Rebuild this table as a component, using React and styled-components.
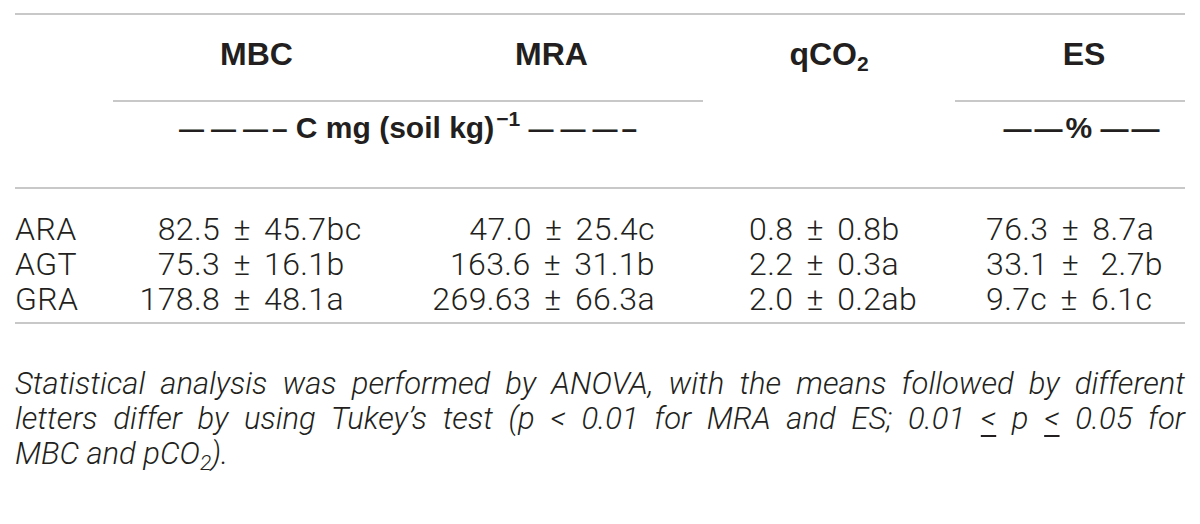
import React from "react";
import styled, { createGlobalStyle } from "styled-components";

const GlobalStyle = createGlobalStyle`
  html, body {
    margin: 0;
    padding: 0;
    background: #ffffff;
  }
  body {
    color: #231f20;
    font-family: Roboto, "Liberation Sans", Arial, sans-serif;
  }
`;

const COLS = "98px 287px 303px 252px 230px";
const RULE = "2px solid #c8c8c8";

const rows = [
  { label: "ARA", mbc: "82.5 ± 45.7bc", mra: "47.0 ± 25.4c", q: "0.8 ± 0.8b", es: "76.3 ± 8.7a" },
  { label: "AGT", mbc: "75.3 ± 16.1b", mra: "163.6 ± 31.1b", q: "2.2 ± 0.3a", es: "33.1 ±  2.7b" },
  { label: "GRA", mbc: "178.8 ± 48.1a", mra: "269.63 ± 66.3a", q: "2.0 ± 0.2ab", es: "9.7c ± 6.1c" },
];

function Value({ text }) {
  const [a, b] = text.split("±");
  return (
    <>
      {a}
      <Pm>±</Pm>
      {b}
    </>
  );
}

function Decimal({ text }) {
  const i = text.indexOf(".");
  return (
    <>
      <Int>{text.slice(0, i)}</Int>
      <Value text={text.slice(i)} />
    </>
  );
}

export default function App() {
  return (
    <Page>
      <GlobalStyle />
      <Table>
        <Row>
          <HeadCell />
          <HeadCell $underline>MBC</HeadCell>
          <HeadCell $underline>MRA</HeadCell>
          <HeadCell>
            qCO<Sub>2</Sub>
          </HeadCell>
          <HeadCell $underline $shift={28}>
            ES
          </HeadCell>
        </Row>

        <Row $rule>
          <UnitCell />
          <UnitCell $span={2}>
            <Dashes>— — —</Dashes>
            <ShortDash>–</ShortDash> C mg (soil kg)<Sup>−1</Sup>{" "}
            <Dashes>— — —</Dashes>
            <ShortDash>–</ShortDash>
          </UnitCell>
          <UnitCell />
          <UnitCell $shift={26}>
            <Dashes $wide>——</Dashes>% <Dashes $wide>——</Dashes>
          </UnitCell>
        </Row>

        <Body>
          {rows.map((r) => (
            <Row key={r.label}>
              <Cell>{r.label}</Cell>
              <Cell $pad={23}>
                <Decimal text={r.mbc} />
              </Cell>
              <Cell $right $pad={48}>
                <Value text={r.mra} />
              </Cell>
              <Cell $pad={46}>
                <Value text={r.q} />
              </Cell>
              <Cell $pad={31}>
                <Value text={r.es} />
              </Cell>
            </Row>
          ))}
        </Body>
      </Table>

      <Note>
        <NoteLine $full>
          Statistical analysis was performed by ANOVA, with the means followed by different
        </NoteLine>
        <NoteLine $full>
          letters differ by using Tukey’s test (p &lt; 0.01 for MRA and ES; 0.01 <Le>&lt;</Le> p{" "}
          <Le>&lt;</Le> 0.05 for
        </NoteLine>
        <NoteLine>
          MBC and pCO<NoteSub>2</NoteSub>).
        </NoteLine>
      </Note>
    </Page>
  );
}

const Page = styled.div`
  width: 1200px;
  height: 524px;
  box-sizing: border-box;
  padding: 13px 15px 0;
  overflow: hidden;
`;

const Table = styled.div`
  border-top: ${RULE};
`;

const Row = styled.div`
  display: grid;
  grid-template-columns: ${COLS};
  border-bottom: ${(p) => (p.$rule ? RULE : "none")};
`;

const HeadCell = styled.div`
  font-family: "Liberation Sans", Arial, sans-serif;
  font-weight: 700;
  font-size: 32px;
  line-height: 38px;
  text-align: center;
  padding: 20px 0 27px ${(p) => p.$shift || 0}px;
  border-bottom: 2px solid ${(p) => (p.$underline ? "#c8c8c8" : "transparent")};
`;

const Sub = styled.sub`
  font-size: 21px;
  line-height: 0;
  vertical-align: -6px;
`;

const UnitCell = styled.div`
  grid-column: span ${(p) => p.$span || 1};
  font-family: "Liberation Sans", Arial, sans-serif;
  font-weight: 700;
  font-size: 30px;
  line-height: 36px;
  text-align: center;
  white-space: nowrap;
  padding: 8px 0 40px ${(p) => p.$shift || 0}px;
`;

const Dashes = styled.span`
  font-size: ${(p) => (p.$wide ? 28 : 25)}px;
  letter-spacing: ${(p) => (p.$wide ? 3 : 0)}px;
`;

const ShortDash = styled.span`
  font-size: 28px;
  margin-left: 4px;
`;

const Sup = styled.sup`
  font-size: 21px;
  line-height: 0;
  vertical-align: 12px;
  margin-left: 2px;
`;

const Body = styled.div`
  padding: 23px 0 5px;
  border-bottom: ${RULE};
`;

const Cell = styled.div`
  font-family: Roboto, "Liberation Sans", Arial, sans-serif;
  font-weight: 300;
  font-size: 32px;
  line-height: 35px;
  letter-spacing: 0.4px;
  white-space: pre;
  text-align: ${(p) => (p.$right ? "right" : "left")};
  padding-left: ${(p) => (p.$right ? 0 : p.$pad || 0)}px;
  padding-right: ${(p) => (p.$right ? p.$pad : 0)}px;
`;

const Int = styled.span`
  display: inline-block;
  width: 58px;
  text-align: right;
`;

const Pm = styled.span`
  margin: 0 5px;
`;

const Note = styled.div`
  margin-top: 42px;
  font-family: Roboto, "Liberation Sans", Arial, sans-serif;
  font-weight: 300;
  font-style: italic;
  font-size: 31px;
  line-height: 35px;
`;

const NoteLine = styled.div`
  white-space: nowrap;
  text-align: ${(p) => (p.$full ? "justify" : "left")};
  text-align-last: ${(p) => (p.$full ? "justify" : "left")};
`;

const Le = styled.span`
  text-decoration: underline;
  text-underline-offset: 6px;
  text-decoration-thickness: 2px;
`;

const NoteSub = styled.sub`
  font-size: 21px;
  line-height: 0;
  vertical-align: -6px;
`;
